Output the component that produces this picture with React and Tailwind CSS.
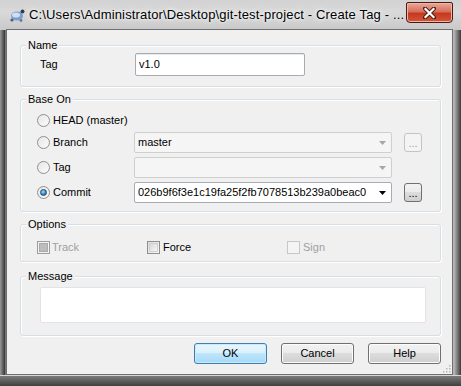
import clsx from "clsx";

function Radio({ checked }) {
  return (
    <div className="flex h-[13px] w-[13px] items-center justify-center rounded-full border border-[#8f8f8f] bg-[linear-gradient(135deg,#e6e6e6,#fbfbfb)]">
      {checked && (
        <div className="h-[7px] w-[7px] rounded-full border border-[#1d4a6b] bg-[radial-gradient(circle_at_40%_35%,#9fe0ff,#2a86c2_60%,#16507c)]" />
      )}
    </div>
  );
}

function Check({ state }) {
  // state: "off" | "off-disabled" | "mixed-disabled"
  return (
    <div
      className={clsx(
        "flex h-[13px] w-[13px] items-center justify-center border",
        state == "off" && "border-[#8f8f8f] bg-[linear-gradient(135deg,#dcdcdc,#fbfbfb)]",
        state == "off-disabled" && "border-[#c7c7c7] bg-[#f4f4f4]",
        state == "mixed-disabled" && "border-[#9d9d9d] bg-[#f4f4f4]",
      )}
    >
      {state == "mixed-disabled" && <div className="h-[9px] w-[9px] border border-[#a9a9a9] bg-[#bdbdbd]" />}
      {state == "off" && <div className="h-[9px] w-[9px] border border-[#d0d0d0] bg-[linear-gradient(135deg,#d8d8d8,#f6f6f6)]" />}
    </div>
  );
}

function Arrow({ enabled }) {
  return (
    <svg width="7" height="4" viewBox="0 0 7 4" className="mr-[5px]">
      <polygon points="0,0 7,0 3.5,4" fill={enabled ? "#000" : "#a7a7a7"} />
    </svg>
  );
}

function Combo({ value, enabled }) {
  return (
    <div
      className={clsx(
        "flex h-[21px] w-[258px] items-center rounded-[2px] border pl-[3px]",
        enabled ? "border-[#a5acb5] bg-white" : "border-[#cfcfcf] bg-[#f5f5f5]",
      )}
    >
      <span className="flex-1 truncate">{value}</span>
      <Arrow enabled={enabled} />
    </div>
  );
}

function DotsButton({ enabled }) {
  return (
    <div
      className={clsx(
        "flex h-[19px] w-[18px] items-end justify-center rounded-[3px] border pb-[2px] leading-none",
        enabled
          ? "border-[#707070] bg-[linear-gradient(#f2f2f2,#ebebeb_50%,#dddddd_50%,#cfcfcf)] text-black"
          : "border-[#c4c4c4] bg-[#f4f4f4] text-[#a0a0a0]",
      )}
    >
      ...
    </div>
  );
}

function Group({ label, className, children }) {
  return (
    <div
      className={clsx(
        "relative mx-[13px] mr-[11px] rounded-[3px] border border-[#d5dfe5] shadow-[inset_1px_1px_0_#fff,1px_1px_0_#fff]",
        className,
      )}
    >
      <span className="absolute -top-[8px] left-[5px] bg-[#f0f0f0] px-[2px] leading-[14px]">{label}</span>
      {children}
    </div>
  );
}

function Button({ children, isDefault }) {
  return (
    <div
      className={clsx(
        "flex h-[21px] w-[73px] items-center justify-center rounded-[3px] border",
        isDefault
          ? "border-[#3c7fb1] bg-[linear-gradient(#eaf6fd,#d9f0fc_50%,#bee6fd_50%,#a7d9f5)] shadow-[inset_0_0_0_1px_#c7ebfc]"
          : "border-[#707070] bg-[linear-gradient(#f2f2f2,#ebebeb_50%,#dddddd_50%,#cfcfcf)] shadow-[inset_0_0_0_1px_#fcfcfc]",
      )}
    >
      {children}
    </div>
  );
}

export default function App() {
  return (
    <div className="flex h-[386px] w-[461px] flex-col overflow-hidden bg-[linear-gradient(90deg,#9a9a9a,#3d3d3d_1%,#3d3d3d_1.1%,#b5b5b5_1.3%,#c4c4c4_50%,#b5b5b5_98.5%,#8c8c8c_99%,#3a3a3a)] font-[family-name:Liberation_Sans,Arial,sans-serif] text-[11px] text-black">
      {/* Title bar */}
      <div className="flex h-[30px] shrink-0 items-start bg-[linear-gradient(#d2d2d2,#d9d9d9_40%,#c9c9c9)] pl-[9px] pr-[8px] pt-[2px]">
        <svg width="17" height="16" viewBox="0 0 17 16" className="mt-[5px]">
          <ellipse cx="8" cy="9" rx="6" ry="4.5" fill="#7b9fcf" />
          <ellipse cx="7" cy="8" rx="4" ry="2.5" fill="#cfe0f5" />
          <circle cx="13.5" cy="4.5" r="2" fill="#2e3c56" />
          <circle cx="3" cy="13" r="1.6" fill="#4f5f78" />
          <circle cx="12" cy="13.5" r="1.4" fill="#6a7a92" />
        </svg>
        <span className="ml-[3px] mt-[5px] flex-1 whitespace-nowrap text-[13px] leading-[15px] tracking-[0.15px] [text-shadow:0_0_6px_#fff,0_0_3px_#fff]">
          C:\Users\Administrator\Desktop\git-test-project - Create Tag - ...
        </span>
        <div className="flex h-[21px] w-[47px] items-center justify-center rounded-b-[4px] rounded-t-[2px] border border-[#4a1b12] bg-[linear-gradient(#e9a99b,#d86f5b_45%,#c4391f_55%,#d5553a)] shadow-[inset_0_0_0_1px_#f0b5a5]">
          <svg width="13" height="12" viewBox="0 0 13 12">
            <path d="M2 1.5 L11 10.5 M11 1.5 L2 10.5" stroke="#4a1b12" strokeWidth="4" strokeLinecap="round" />
            <path d="M2.5 2 L10.5 10 M10.5 2 L2.5 10" stroke="#fff" strokeWidth="2.2" strokeLinecap="square" />
          </svg>
        </div>
      </div>

      {/* Client area */}
      <div className="relative ml-[7px] flex h-[344px] w-[445px] shrink-0 flex-col bg-[#f0f0f0] pt-[15px] shadow-[0_0_0_1px_#6e6e6e]">
        <Group label="Name" className="h-[42px]">
          <div className="mt-[7px] flex items-center">
            <span className="ml-[19px] w-[95px]">Tag</span>
            <div className="flex h-[23px] w-[170px] items-center rounded-[2px] border border-[#a5acb5] bg-white pl-[3px] shadow-[inset_0_1px_0_#e3e9ef]">
              v1.0
            </div>
          </div>
        </Group>

        <Group label="Base On" className="mt-[12px] h-[113px]">
          <div className="mt-[10px] flex h-[20px] items-center pl-[16px]">
            <Radio />
            <span className="ml-[3px]">HEAD (master)</span>
          </div>
          <div className="mt-[2px] flex h-[21px] items-center pl-[16px]">
            <Radio />
            <span className="ml-[3px] w-[81px]">Branch</span>
            <Combo value="master" />
            <div className="ml-[12px]">
              <DotsButton />
            </div>
          </div>
          <div className="mt-[4px] flex h-[21px] items-center pl-[16px]">
            <Radio />
            <span className="ml-[3px] w-[81px]">Tag</span>
            <Combo value="" />
          </div>
          <div className="mt-[4px] flex h-[21px] items-center pl-[16px]">
            <Radio checked />
            <span className="ml-[3px] w-[81px]">Commit</span>
            <Combo value="026b9f6f3e1c19fa25f2fb7078513b239a0beac0" enabled />
            <div className="ml-[12px]">
              <DotsButton enabled />
            </div>
          </div>
        </Group>

        <Group label="Options" className="mt-[12px] h-[38px]">
          <div className="mt-[14px] flex items-center pl-[16px]">
            <Check state="mixed-disabled" />
            <span className="ml-[2px] w-[95px] text-[#a0a0a0]">Track</span>
            <Check state="off" />
            <span className="ml-[3px] w-[124px]">Force</span>
            <Check state="off-disabled" />
            <span className="ml-[3px] text-[#a0a0a0]">Sign</span>
          </div>
        </Group>

        <Group label="Message" className="mt-[14px] h-[60px]">
          <div className="ml-[19px] mt-[10px] h-[36px] w-[386px] rounded-[2px] border border-[#e2e3ea] bg-white" />
        </Group>

        <div className="mr-[11px] mt-[7px] flex justify-end gap-[14px]">
          <Button isDefault>OK</Button>
          <Button>Cancel</Button>
          <Button>Help</Button>
        </div>

        {/* size grip */}
        <svg width="10" height="10" viewBox="0 0 10 10" className="absolute bottom-[1px] right-[1px]">
          {[
            [8, 2],
            [5, 5],
            [8, 5],
            [2, 8],
            [5, 8],
            [8, 8],
          ].map(([x, y]) => (
            <rect key={`${x}-${y}`} x={x} y={y} width="1.5" height="1.5" fill="#b8b8b8" />
          ))}
        </svg>
      </div>

      {/* bottom frame */}
      <div className="mt-[1px] h-[1px] bg-[#d6d6d6]" />
      <div className="flex-1 bg-[linear-gradient(#7a7a7a,#3f3f3f)]" />
    </div>
  );
}
